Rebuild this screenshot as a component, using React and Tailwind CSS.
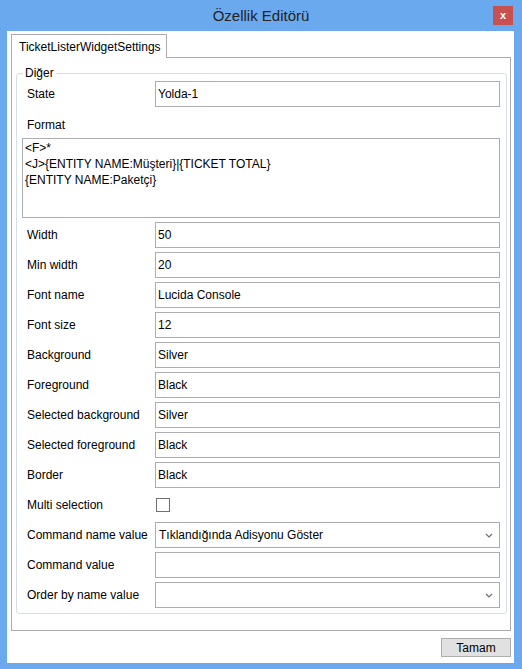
import React from 'react';

const font = { fontFamily: '"Liberation Sans", Arial, sans-serif' };

const rows = [
  ['Width', '50'],
  ['Min width', '20'],
  ['Font name', 'Lucida Console'],
  ['Font size', '12'],
  ['Background', 'Silver'],
  ['Foreground', 'Black'],
  ['Selected background', 'Silver'],
  ['Selected foreground', 'Black'],
  ['Border', 'Black'],
];

function Chevron() {
  return (
    <svg width="8" height="5" viewBox="0 0 8 5" className="shrink-0">
      <path d="M1 1 L4 4 L7 1" fill="none" stroke="#6d6d6d" strokeWidth="1.2" />
    </svg>
  );
}

function Row({ label, children }) {
  return (
    <div className="flex h-[26px] items-center">
      <span className="w-[128px] shrink-0 text-[12px] text-black">{label}</span>
      <div className="flex-1 h-full flex items-center">{children}</div>
    </div>
  );
}

function TextBox({ value }) {
  return (
    <div className="w-full h-full border border-[#abadb3] bg-white flex items-center px-[2px] text-[12px] text-black">
      {value}
    </div>
  );
}

function Combo({ value }) {
  return (
    <div className="w-full h-full border border-[#acacac] bg-white flex items-center pl-[3px] pr-[6px] text-[12px] text-black">
      <span className="flex-1">{value}</span>
      <Chevron />
    </div>
  );
}

export default function App() {
  return (
    <div className="w-[522px] h-[669px] bg-[#6ba9ef] flex flex-col" style={font}>
      {/* Title bar */}
      <div className="relative h-[31px] shrink-0 flex items-center justify-center">
        <span className="text-[15px] text-[#222] mt-[2px]">Özellik Editörü</span>
        <div className="absolute right-[9px] top-[6px] w-[20px] h-[19px] bg-[#c75050] flex items-center justify-center text-white text-[11px] font-bold leading-none">x</div>
      </div>

      {/* Client */}
      <div className="ml-[7px] mr-[8px] mb-[6px] flex-1 bg-white flex flex-col">
        <div className="flex-1 flex flex-col pt-[3px] pl-[4px] pr-[3px]">
          <div className="relative z-10 -mb-px self-start h-[24px] w-[156px] border border-b-0 border-[#acacac] bg-white flex items-center pl-[7px] text-[12px] text-black">
            TicketListerWidgetSettings
          </div>
          <div className="flex-1 border border-[#acacac] flex flex-col">
            <fieldset className="mt-[7px] ml-[4px] mr-[3px] border border-[#d5dfe5] rounded-[3px] pl-[10px] pr-[6px] pb-[5px]">
              <legend className="ml-[-4px] px-[2px] text-[12px] leading-[16px] text-black">Diğer</legend>
              <div className="flex flex-col gap-[4px]">
                <Row label="State"><TextBox value="Yolda-1" /></Row>
                <div className="-mb-[4px] h-[27px] flex items-center text-[12px] text-black">Format</div>
                <div className="ml-[-5px] h-[80px] border border-[#abadb3] px-[2px] pt-[1px] text-[12px] leading-[16px] text-black">
                  <div>&lt;F&gt;*</div>
                  <div>&lt;J&gt;{'{ENTITY NAME:Müşteri}|{TICKET TOTAL}'}</div>
                  <div>{'{ENTITY NAME:Paketçi}'}</div>
                </div>
                {rows.map(([l, v]) => (
                  <Row key={l} label={l}><TextBox value={v} /></Row>
                ))}
                <Row label="Multi selection">
                  <div className="ml-[1px] w-[14px] h-[14px] border border-[#707070] bg-white" />
                </Row>
                <Row label="Command name value"><Combo value="Tıklandığında Adisyonu Göster" /></Row>
                <Row label="Command value"><TextBox value="" /></Row>
                <Row label="Order by name value"><Combo value="" /></Row>
              </div>
            </fieldset>
          </div>
        </div>
        <div className="h-[32px] shrink-0 flex items-start justify-end pt-[7px] pr-[3px]">
          <div className="w-[70px] h-[19px] bg-[#e1e1e1] border border-[#adadad] flex items-center justify-center text-[12px] text-black">
            Tamam
          </div>
        </div>
      </div>
    </div>
  );
}
